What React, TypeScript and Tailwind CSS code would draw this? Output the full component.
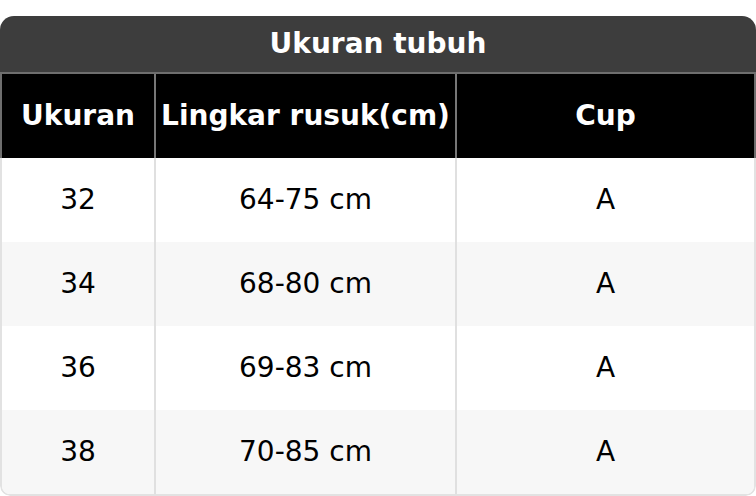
const ROWS = [
  { size: '32', rib: '64-75 cm', cup: 'A' },
  { size: '34', rib: '68-80 cm', cup: 'A' },
  { size: '36', rib: '69-83 cm', cup: 'A' },
  { size: '38', rib: '70-85 cm', cup: 'A' },
];

export default function App() {
  return (
    <div className="w-[756px] h-[496px] bg-white pt-[16px] font-['DejaVu_Sans',sans-serif]">
      <div className="rounded-t-[14px] rounded-b-[10px] overflow-hidden">
        {/* Judul tabel */}
        <div className="h-[56px] bg-[#3d3d3d] flex items-center justify-center text-white font-bold text-[28px]">
          Ukuran tubuh
        </div>

        {/* Kepala kolom */}
        <div className="h-[86px] bg-black border-t-2 border-x-2 border-[#6e6e6e] grid grid-cols-[152px_2px_299px_2px_1fr] text-white font-bold text-[28px]">
          <div className="flex items-center justify-center">Ukuran</div>
          <div className="bg-[#777]" />
          <div className="flex items-center justify-center">Lingkar rusuk(cm)</div>
          <div className="bg-[#777]" />
          <div className="flex items-center justify-center">Cup</div>
        </div>

        {/* Isi */}
        <div className="border-x-2 border-b-2 border-[#e2e2e2] rounded-b-[10px] overflow-hidden">
          {ROWS.map((row, i) => (
            <div
              key={row.size}
              className={`h-[84px] grid grid-cols-[152px_2px_299px_2px_1fr] text-[28px] text-black ${
                i % 2 === 1 ? 'bg-[#f7f7f7]' : 'bg-white'
              }`}
            >
              <div className="flex items-center justify-center">{row.size}</div>
              <div className="bg-[#e0e0e0]" />
              <div className="flex items-center justify-center">{row.rib}</div>
              <div className="bg-[#e0e0e0]" />
              <div className="flex items-center justify-center">{row.cup}</div>
            </div>
          ))}
        </div>
      </div>
    </div>
  );
}
